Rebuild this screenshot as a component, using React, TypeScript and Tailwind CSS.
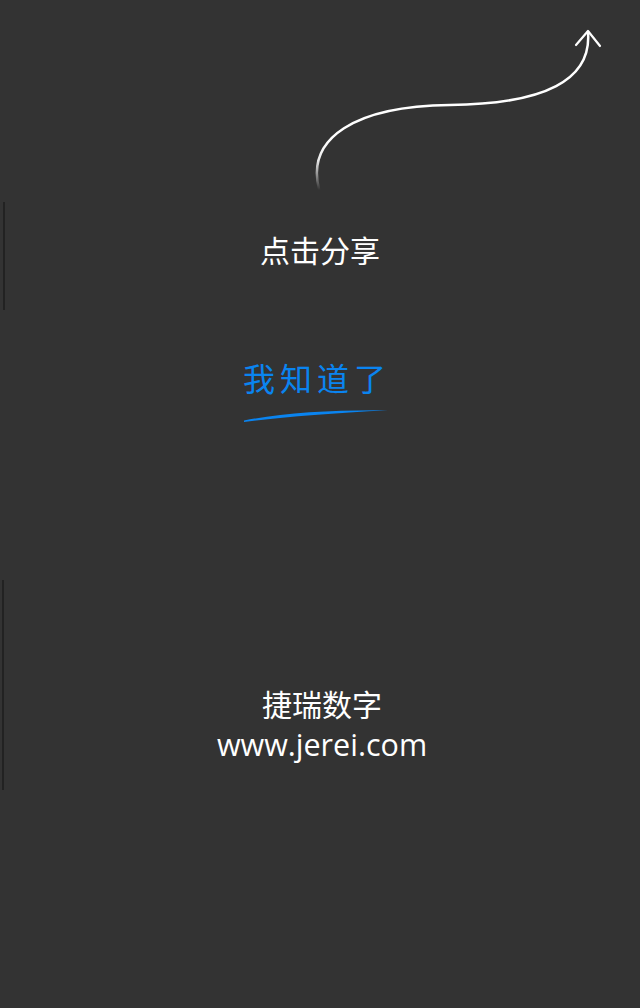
import React from "react";

const cjk = "font-['Microsoft_YaHei','Noto_Sans_CJK_SC',sans-serif]";

function ShareArrow() {
  return (
    <svg width="640" height="196" viewBox="0 0 640 196" className="block">
      <defs>
        <linearGradient id="tail" x1="0" y1="190" x2="0" y2="140" gradientUnits="userSpaceOnUse">
          <stop offset="0" stopColor="#ffffff" stopOpacity="0" />
          <stop offset="0.6" stopColor="#ffffff" stopOpacity="0.9" />
          <stop offset="1" stopColor="#ffffff" stopOpacity="1" />
        </linearGradient>
      </defs>
      <path
        d="M319,189 C306,138 355,106 450,105 C545,104 592,80 588,32"
        fill="none"
        stroke="url(#tail)"
        strokeWidth="2.5"
        strokeLinecap="round"
      />
      <path
        d="M576,45 L588,31 L600,46"
        fill="none"
        stroke="#ffffff"
        strokeWidth="2.2"
        strokeLinecap="round"
        strokeLinejoin="round"
      />
    </svg>
  );
}

export default function App() {
  return (
    <div className="w-[640px] h-[1008px] bg-[#333333] overflow-hidden">
      <ShareArrow />

      {/* hint block */}
      <div className="mt-[6px] ml-[3px] h-[108px] border-l-2 border-[#222222] flex justify-center pt-[26px] pr-[5px]">
        <span className={`${cjk} text-[30px] leading-[42px] text-white`}>点击分享</span>
      </div>

      {/* dismiss button */}
      <div className="mt-[46px] flex flex-col items-center">
        <button className={`${cjk} text-[32px] leading-[42px] tracking-[5px] text-[#0a84f0] pr-[6px]`}>
          我知道了
        </button>
        <svg width="640" height="26" viewBox="0 0 640 26" className="block">
          <path
            d="M244,22.5 Q300,11.5 388,12.3 Q300,17 244,24 Z"
            fill="#0a84f0"
          />
        </svg>
      </div>

      {/* footer */}
      <div className="mt-[156px] ml-[2px] h-[210px] border-l-2 border-[#222222] flex flex-col items-center pt-[102px]">
        <span className={`${cjk} text-[30px] leading-[42px] text-white`}>捷瑞数字</span>
        <span className="font-['Open_Sans',sans-serif] text-[30.5px] leading-[40px] text-white">
          www.jerei.com
        </span>
      </div>
    </div>
  );
}
